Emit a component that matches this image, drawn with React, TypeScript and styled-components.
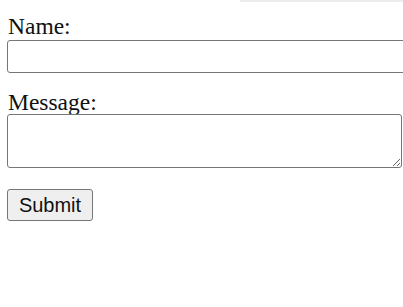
import { FC } from 'react';
import styled, { createGlobalStyle } from 'styled-components';

const GlobalStyle = createGlobalStyle`
  html, body {
    margin: 0;
    padding: 0;
    background: #fff;
    overflow: hidden;
  }
  body {
    font-family: "Liberation Serif", "Times New Roman", serif;
  }
`;

const Page = styled.div`
  position: relative;
  width: 403px;
  height: 307px;
  overflow: hidden;
`;

const TopEdge = styled.div`
  position: absolute;
  top: 0;
  left: 240px;
  width: 163px;
  height: 2px;
  background: #ececec;
`;

const Form = styled.form`
  display: flex;
  flex-direction: column;
  align-items: flex-start;
  padding: 14px 0 0 7px;
`;

const Label = styled.label`
  display: block;
  font-size: 23.5px;
  line-height: 24px;
  color: #111;
  padding-left: 1px;
`;

const TextInput = styled.input`
  box-sizing: border-box;
  width: 420px;
  height: 33px;
  margin: 2px 0 17px;
  border: 1px solid #767676;
  border-radius: 3px;
  background: #fff;
  font-size: 16px;
`;

const TextArea = styled.textarea`
  box-sizing: border-box;
  width: 395px;
  height: 54px;
  margin: 0 0 21px;
  border: 1px solid #767676;
  border-radius: 3px;
  background: #fff;
  font-size: 16px;
  resize: both;
`;

const Button = styled.button`
  box-sizing: border-box;
  width: 86px;
  height: 32px;
  padding: 0;
  border: 1px solid #767676;
  border-radius: 3px;
  background: #efefef;
  color: #111;
  font-family: "Liberation Sans", Arial, sans-serif;
  font-size: 20px;
`;

const App: FC = () => (
  <Page>
    <GlobalStyle />
    <TopEdge />
    <Form onSubmit={(e) => e.preventDefault()}>
      <Label htmlFor="name">Name:</Label>
      <TextInput id="name" type="text" />
      <Label htmlFor="message">Message:</Label>
      <TextArea id="message" />
      <Button type="submit">Submit</Button>
    </Form>
  </Page>
);

export default App;
